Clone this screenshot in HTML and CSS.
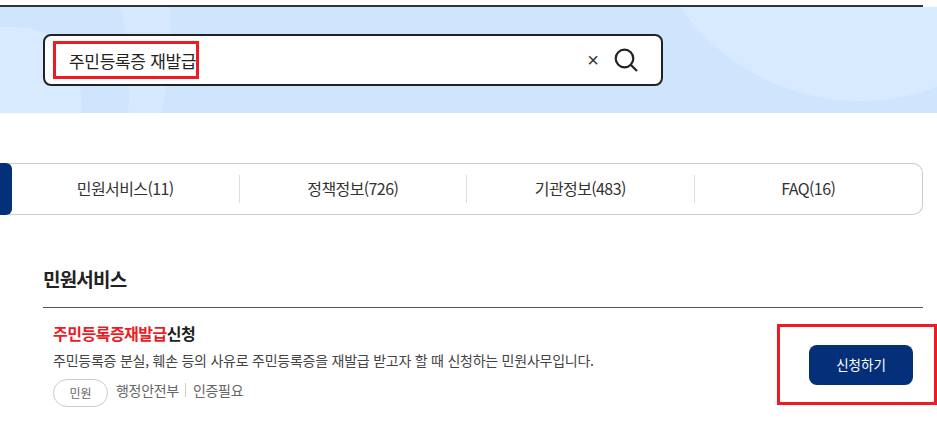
FILE: index.html
```html
<!DOCTYPE html>
<html lang="ko">
<head>
<meta charset="utf-8">
<title>통합검색</title>
<link rel="stylesheet" href="styles.css">
</head>
<body>
<header class="hero">
  <svg class="hero-bg" width="937" height="106" viewBox="0 0 937 106" aria-hidden="true">
    <circle cx="860" cy="-125" r="219" fill="#d8eaff"/>
    <path d="M0 20C50 18 80 35 82 106H0Z" fill="#d8eaff"/>
    <path d="M120 0C128 25 132 60 128 106H161C167 80 172 40 170 0Z" fill="#d6e9ff"/>
  </svg>
  <form class="search">
    <span class="query-mark"><span class="query">주민등록증 재발급</span></span>
    <span class="clear">×</span>
    <svg class="search-icon" width="26" height="26" viewBox="0 0 26 26" aria-hidden="true">
      <circle cx="11.5" cy="11.5" r="8.8" fill="none" stroke="#222" stroke-width="2.2"/>
      <path d="M18 18L24 24" stroke="#222" stroke-width="2.2" fill="none"/>
    </svg>
  </form>
</header>
<nav class="tabs">
  <span class="tab-active"></span>
  <a class="tab">민원서비스(11)</a>
  <a class="tab">정책정보(726)</a>
  <a class="tab">기관정보(483)</a>
  <a class="tab">FAQ(16)</a>
</nav>
<main class="results">
  <h2 class="section-title">민원서비스</h2>
  <article class="result">
    <div class="result-body">
      <h3 class="result-title"><em class="hit">주민등록증재발급</em>신청</h3>
      <p class="result-desc">주민등록증 분실, 훼손 등의 사유로 주민등록증을 재발급 받고자 할 때 신청하는 민원사무입니다.</p>
      <div class="result-meta">
        <span class="pill">민원</span>
        <span class="org">행정안전부</span>
        <span class="auth">인증필요</span>
      </div>
    </div>
    <a class="apply">신청하기</a>
    <span class="apply-mark"></span>
  </article>
</main>
</body>
</html>
```
FILE: styles.css
```css
* { box-sizing: border-box; }
html, body { margin: 0; padding: 0; background: #fff; overflow: hidden; }
body {
  width: 937px;
  height: 423px;
  padding-top: 5px;
  font-family: "Noto Sans CJK KR", "Noto Sans", sans-serif;
  color: #222;
}
.hero {
  position: relative;
  height: 108px;
  padding: 29px 0 0 43px;
  background: #cfe5fe;
  overflow: hidden;
}
.hero::before {
  content: "";
  position: absolute;
  z-index: 2;
  left: 0;
  top: 0;
  width: 923px;
  height: 2px;
  background: #333;
}
.hero::after {
  content: "";
  position: absolute;
  z-index: 1;
  left: 923px;
  top: 0;
  width: 14px;
  height: 2px;
  background: #fff;
}
.hero-bg { position: absolute; left: 0; top: 2px; }
.search {
  position: relative;
  display: flex;
  align-items: center;
  width: 620px;
  height: 52px;
  padding: 0 22px 0 8px;
  background: #fff;
  border: 2px solid #222;
  border-radius: 8px;
}
.query-mark {
  display: flex;
  align-items: center;
  width: 146px;
  height: 38px;
  padding-left: 13px;
  border: 3px solid #ed1c24;
  margin-right: auto;
}
.query { font-size: 17px; letter-spacing: -0.3px; color: #222; white-space: nowrap; }
.clear { font-size: 20px; line-height: 1; color: #333; margin-right: 14px; font-family: "Liberation Sans", sans-serif; }
.search-icon { display: block; }
.tabs {
  position: relative;
  display: flex;
  align-items: center;
  width: 923px;
  height: 52px;
  margin-top: 50px;
  padding-left: 12px;
  border: 1px solid #ccc;
  border-left: 0;
  border-radius: 10px;
}
.tab-active {
  position: absolute;
  left: 0;
  top: -1px;
  bottom: -1px;
  width: 12px;
  background: #033079;
  border-radius: 0 6px 6px 0;
}
.tab {
  flex: 0 0 227.5px;
  height: 28px;
  line-height: 26px;
  text-align: center;
  font-size: 16px;
  letter-spacing: -0.6px;
  color: #333;
  border-right: 1px solid #ddd;
}
.tab:last-child { border-right: 0; }
.results { margin-left: 43px; width: 880px; }
.section-title {
  margin: 50px 0 0;
  height: 43px;
  padding-bottom: 15px;
  line-height: 27px;
  font-size: 19px;
  font-weight: 700;
  letter-spacing: -0.8px;
  color: #222;
  border-bottom: 1px solid #555;
}
.result {
  position: relative;
  display: flex;
  align-items: flex-start;
  justify-content: space-between;
  padding: 13px 10px 0;
}
.result-title { margin: 0; font-size: 16px; line-height: 24px; font-weight: 700; letter-spacing: -0.5px; color: #222; }
.hit { font-style: normal; color: #ed1c24; }
.result-desc { margin: 4px 0 0; font-size: 14px; line-height: 22px; letter-spacing: -0.24px; color: #444; }
.result-meta { display: flex; align-items: flex-start; margin-top: 8px; font-size: 14px; line-height: 22px; color: #666; }
.pill {
  width: 55px;
  height: 28px;
  line-height: 26px;
  margin-right: 8px;
  text-align: center;
  font-size: 12px;
  border: 1px solid #ccc;
  border-radius: 14px;
}
.org { letter-spacing: -0.3px; padding-right: 7px; margin-right: 7px; position: relative; }
.org::after {
  content: "";
  position: absolute;
  right: 0;
  top: 4px;
  bottom: 4px;
  width: 1px;
  background: #ccc;
}
.auth { letter-spacing: -0.3px; }
.apply {
  width: 104px;
  height: 40px;
  margin-top: 24px;
  line-height: 39px;
  text-align: center;
  font-size: 13.5px;
  color: #fff;
  background: #033079;
  border-radius: 8px;
}
.apply-mark {
  position: absolute;
  left: 734px;
  top: 16px;
  width: 160px;
  height: 81px;
  border: 3px solid #ed1c24;
}
```
